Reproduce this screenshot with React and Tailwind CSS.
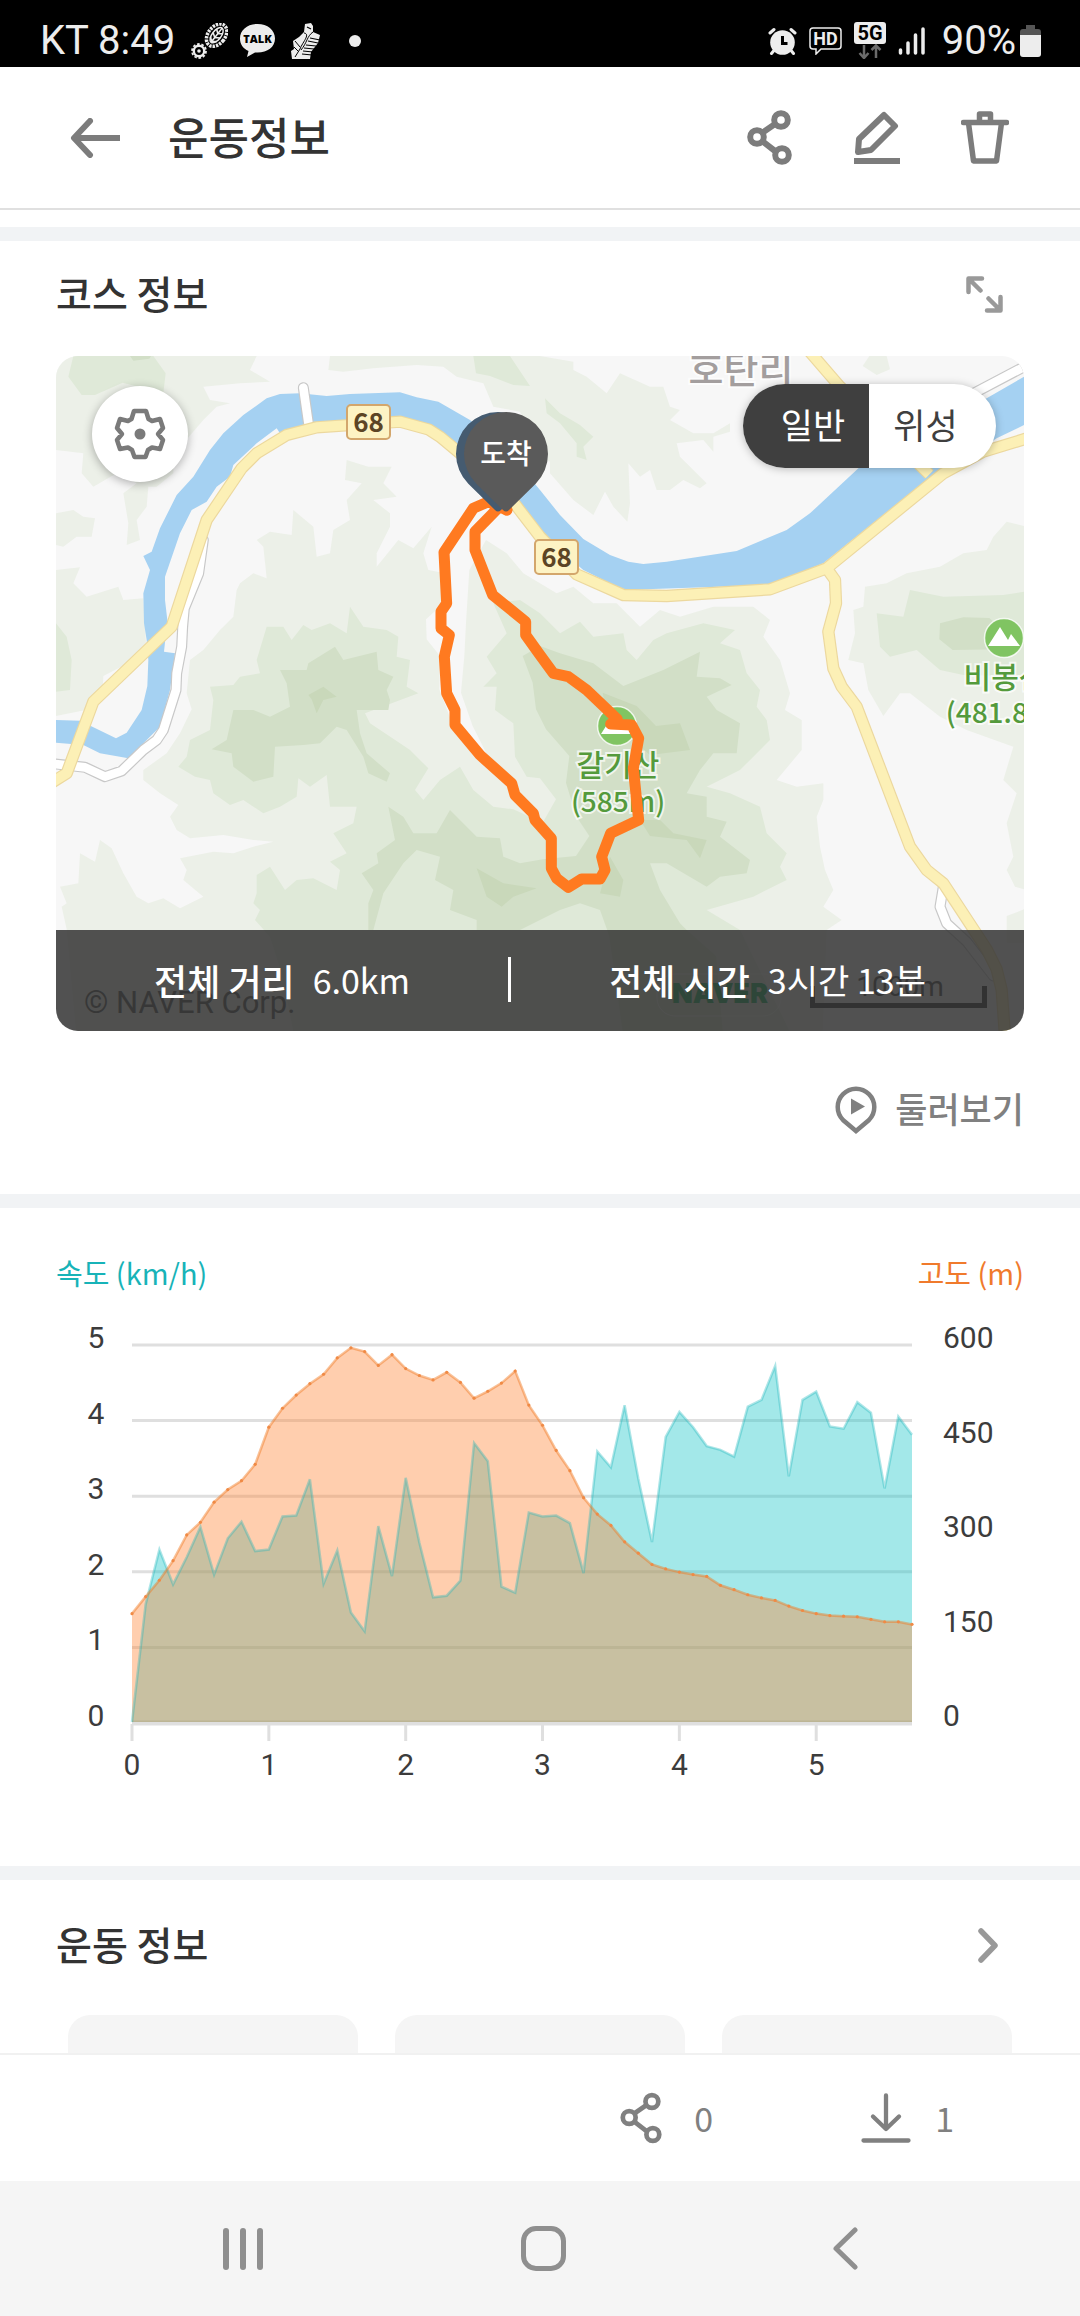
const KR = "font-['Noto_Sans_CJK_KR',sans-serif]"
const ROBOTO = "font-['Roboto',sans-serif]"

// one sample every 0.1 km
const SPEED = [
  0, 1.56, 2.28, 1.82, 2.18, 2.58, 1.95, 2.43, 2.65, 2.26, 2.28, 2.72, 2.73, 3.21, 1.83,
  2.27, 1.45, 1.2, 2.59, 1.93, 3.23, 2.37, 1.65, 1.67, 1.87, 3.69, 3.45, 1.79, 1.71, 2.77,
  2.72, 2.73, 2.63, 1.97, 3.58, 3.37, 4.19, 3.22, 2.38, 3.77, 4.1, 3.9, 3.65, 3.6, 3.51,
  4.17, 4.26, 4.71, 3.25, 4.26, 4.37, 3.91, 3.88, 4.23, 4.09, 3.09, 4.04, 3.8,
]
const ALTITUDE = [
  172, 199, 225, 256, 297, 317, 349, 369, 383, 409, 468, 498, 519, 537, 552, 578, 594, 588,
  566, 583, 561, 550, 543, 555, 539, 514, 525, 538, 557, 503, 471, 431, 399, 356, 330, 312,
  286, 268, 250, 243, 238, 234, 231, 217, 210, 202, 197, 193, 184, 177, 172, 169, 168, 167,
  163, 159, 159, 155,
]

const CHART = { left: 76, right: 856, top: 48, bottom: 426 }

const toPoints = (data, max) =>
  data.map((v, i) => [
    CHART.left + (i * (CHART.right - CHART.left)) / (data.length - 1),
    CHART.bottom - (v / max) * (CHART.bottom - CHART.top),
  ])

const toLine = (points) => points.map(([x, y]) => `${x.toFixed(1)} ${y.toFixed(1)}`).join(' L')

/* ---------- icons ---------- */

function ShareIcon({ className, stroke = 6 }) {
  return (
    <svg className={className} viewBox="0 0 46 55" fill="none" stroke="currentColor" strokeWidth={stroke}>
      <path d="M15 23 L28 14 M15 31 L28 41" />
      <circle cx="34" cy="10" r="6.8" />
      <circle cx="10" cy="27" r="6.8" />
      <circle cx="35" cy="45" r="6.8" />
    </svg>
  )
}

function EditIcon() {
  return (
    <svg className="w-[46px] h-[54px]" viewBox="0 0 46 54" fill="none" stroke="currentColor" strokeWidth="6">
      <path d="M30 4 L41 15 L17 39 L4 41 L5 28 Z" strokeLinejoin="round" />
      <path d="M0 50 H46" />
    </svg>
  )
}

function TrashIcon() {
  return (
    <svg className="w-12 h-[54px]" viewBox="0 0 48 54" fill="none" stroke="currentColor" strokeWidth="5.5">
      <path d="M2.5 11.5 H45.5" strokeLinecap="round" />
      <path d="M18.5 11 V3 H29.5 V11" strokeLinejoin="round" />
      <path d="M7.5 12 L12.5 50 H35.5 L40.5 12" strokeLinejoin="round" />
    </svg>
  )
}

function GearIcon() {
  return (
    <svg className="w-13 h-13" viewBox="0 0 52 52" fill="none" stroke="#7a7a7a" strokeWidth="4.500" strokeLinejoin="round">
      <path d="M20 3 H32 L34.500 11 L38 13 L46 11 L49 20 L44 26 L49 32 L46 41 L38 39.500 L34 42 L31.500 49 H20.500 L18 42 L14 39.500 L6 41 L3 32 L8 26 L3 20 L6 11 L14 13 L17.500 11 Z" />
      <circle cx="26" cy="26" r="5.500" fill="#7a7a7a" stroke="none" />
    </svg>
  )
}

function TrackerIcon() {
  return (
    <svg className="w-[37px] h-9" viewBox="0 0 37 36" fill="none" stroke="#ededed">
      <g transform="rotate(38 25 13)">
        <ellipse cx="25" cy="12" rx="8.500" ry="12.500" strokeWidth="3.500" strokeDasharray="2.400 1" />
        <ellipse cx="25" cy="12" rx="4.500" ry="9" strokeWidth="1.500" />
        <path d="M25 3 V21 M21 7 L25 10 L29 7 M20.500 12 L25 15 L29.500 12 M21 17 L25 20 L29 17" strokeWidth="1.600" />
      </g>
      <circle cx="8" cy="28" r="5.200" strokeWidth="2.400" />
      <circle cx="8" cy="28" r="7" strokeWidth="1.800" strokeDasharray="2.600 1.800" />
      <circle cx="8" cy="28" r="1.800" fill="#ededed" stroke="none" />
    </svg>
  )
}

function TalkIcon() {
  return (
    <svg className="w-[35px] h-[34px]" viewBox="0 0 35 34">
      <path d="M17.500 0 C27.500 0 35 6 35 14.500 C35 23 27.500 28.500 17.500 28.500 L15 28.400 L7 33 L8.500 27 C3 24.500 0 20 0 14.500 C0 6 7.500 0 17.500 0 Z" fill="#ededed" />
      <text x="17.500" y="19" fontSize="11" textAnchor="middle" fill="#000" className="font-['Open_Sans',sans-serif] font-extrabold">
        TALK
      </text>
    </svg>
  )
}

function ShoeIcon() {
  return (
    <svg className="w-[30px] h-9" viewBox="0 0 30 36">
      <path d="M14 1 L20 0 L22 3 L22 9 L29 12 L27 20 L20 29 L19 36 H1 L0 28 L3 26 L2 18 L8 14 L13 9 Z" fill="#ededed" />
      <path d="M13 10 C20 11 11 20 9 26 L4 34 M22 9 C16 13 16 20 10 27 M4 18 L9 24 M3 24 L7 28" fill="none" stroke="#000" strokeWidth="1" />
      <path d="M19 15 L29 17 M17 18 L27 20 M15 22 L25 23 M13 25 L23 26 M12 28 L22 29 M11 31 L21 32 M16 4 L20 6" fill="none" stroke="#000" strokeWidth="1.200" />
    </svg>
  )
}

function AlarmIcon() {
  return (
    <svg className="w-[29px] h-7" viewBox="0 0 29 28" strokeLinecap="round">
      <circle cx="14.500" cy="15.500" r="12.300" fill="#ededed" />
      <path d="M2 6 L6 2.500 M27 6 L23 2.500 M5.500 24 L3.500 26.500 M23.500 24 L25.500 26.500" stroke="#ededed" strokeWidth="3" fill="none" />
      <path d="M14.500 9 V16.500 H19.500" stroke="#000" strokeWidth="3" fill="none" strokeLinecap="butt" />
    </svg>
  )
}

function HdIcon() {
  return (
    <svg className="w-[33px] h-7" viewBox="0 0 33 28">
      <path d="M4 1 H29 Q32 1 32 4 V19 Q32 22 29 22 H12 L7 27 V22 H4 Q1 22 1 19 V4 Q1 1 4 1 Z" fill="none" stroke="#ededed" strokeWidth="1.500" />
      <text x="16.500" y="18" fontSize="18" textAnchor="middle" fill="#ededed" className="font-['Roboto',sans-serif] font-bold">
        HD
      </text>
    </svg>
  )
}

function FiveGIcon() {
  return (
    <svg className="w-8 h-[37px]" viewBox="0 0 32 37">
      <rect width="32" height="22" rx="3" fill="#ededed" />
      <text x="16" y="18" fontSize="20" textAnchor="middle" fill="#000" className="font-['Roboto',sans-serif] font-bold">
        5G
      </text>
      <path d="M10 23 V35 M5.500 31 L10 36 L14.500 31 M22 36 V24 M17.500 28 L22 23.500 L26.500 28" stroke="#6b6b6b" strokeWidth="2.500" fill="none" />
    </svg>
  )
}

function MountainMark({ x, y }) {
  return (
    <g transform={`translate(${x} ${y})`}>
      <circle r="19.500" fill="#80c462" stroke="#fff" strokeOpacity="0.8" strokeWidth="1.500" />
      <path d="M-16 8 L-4 -11 L4 2 L7 -4 L16 8 Z" fill="#fff" />
    </g>
  )
}

function RoadBadge({ x, y }) {
  return (
    <g transform={`translate(${x} ${y})`}>
      <rect x="1" y="1" width="43" height="34" rx="4" fill="#fdf3c4" stroke="#d3a66c" strokeWidth="2" />
      <text x="22.500" y="28" fontSize="26" textAnchor="middle" fill="#5c4425" className="font-['Noto_Sans_CJK_KR',sans-serif] font-bold">
        68
      </text>
    </g>
  )
}

/* ---------- map ---------- */

const HILLS = [
  {
    fill: '#ecf0e8',
    d: [
      'M0 0 L602 0 L582 42 L642 77 L552 82 L442 92 L462 132 L522 142 L482 152 L442 192 L382 262 L352 277 L352 352 L302 392 L277 392 L272 452 L242 492 L252 552 L212 567 L217 502 L202 412 L242 382 L182 352 L112 392 L77 352 L82 292 L0 282 Z',
      'M822 0 L817 42 L862 47 L952 37 L1012 32 L1082 27 L1162 32 L1202 62 L1282 82 L1312 152 L1392 167 L1452 300 L1482 317 L1482 352 L1552 432 L1612 477 L1647 407 L1672 452 L1714 497 L1722 442 L1717 322 L1752 362 L1782 342 L1802 402 L1842 402 L1882 372 L1932 397 L1952 382 L1872 302 L1862 262 L1942 252 L1972 287 L1972 242 L2022 227 L2022 202 L1972 232 L1912 232 L1842 192 L1872 162 L1842 152 L1822 92 L1782 92 L1692 52 L1652 112 L1592 62 L1552 42 L1552 17 L1452 0 Z',
      'M0 472 L52 462 L82 482 L117 487 L107 542 L62 542 L22 572 L0 567 Z',
      'M0 642 L72 634 L52 682 L92 722 L187 692 L202 732 L262 727 L270 860 L200 930 L142 960 L140 1000 L100 1060 L0 1080 Z',
      'M542 702 L552 682 L592 652 L632 667 L622 572 L602 552 L642 527 L707 537 L712 462 L772 512 L782 602 L822 592 L832 522 L882 492 L872 432 L917 382 L867 372 L872 312 L937 332 L1007 332 L982 382 L1022 422 L952 432 L1002 472 L1002 512 L962 592 L962 632 L1027 552 L1072 577 L1127 512 L1102 592 L1117 642 L1160 650 L1165 740 L1110 790 L1112 850 L1152 900 L1150 1000 L1180 1080 L1250 1180 L1300 1210 L1250 1110 L1215 1010 L1225 900 L1230 800 L1240 642 L1290 552 L1352 592 L1402 652 L1502 712 L1552 692 L1612 742 L1682 742 L1752 812 L1812 762 L1872 782 L1972 752 L2092 752 L2142 792 L2122 842 L2172 912 L2202 1012 L2187 1062 L2237 1092 L2237 1182 L2162 1272 L2222 1292 L2302 1282 L2302 1332 L2282 1382 L2292 1472 L2307 1542 L2332 1602 L2302 1652 L2357 1692 L2312 1722 L2300 2025 L60 2025 L32 1720 L17 1652 L32 1642 L12 1592 L67 1582 L72 1492 L117 1517 L132 1452 L167 1477 L202 1552 L242 1622 L277 1642 L322 1627 L372 1657 L442 1622 L382 1572 L392 1542 L372 1507 L472 1487 L532 1492 L592 1472 L652 1457 L592 1452 L502 1437 L402 1447 L362 1422 L342 1382 L367 1347 L312 1312 L262 1272 L262 1242 L332 1192 L372 1132 L407 1060 L392 1012 L402 912 L442 882 L492 822 L532 782 Z',
      'M2904 510 L2852 497 L2812 542 L2792 582 L2722 592 L2652 632 L2552 652 L2492 682 L2427 692 L2422 752 L2392 762 L2397 832 L2377 912 L2422 922 L2437 1002 L2482 1080 L2532 1012 L2562 1012 L2652 1082 L2732 1122 L2872 1172 L2842 1272 L2882 1312 L2852 1402 L2872 1502 L2852 1542 L2877 1592 L2904 1600 Z',
      'M2420 30 L2440 0 L2492 0 L2502 40 L2462 57 Z',
      'M2852 1680 L2904 1660 V1760 L2852 1760 Z',
    ],
  },
  {
    fill: '#dfe9d8',
    d: [
      'M52 0 L37 62 L77 117 L117 117 L200 80 L322 112 L329 52 L292 0 Z',
      'M0 802 L32 842 L47 912 L42 1002 L0 1007 Z',
      'M1252 0 L1260 52 L1302 60 L1372 87 L1422 90 L1382 30 L1362 0 Z',
      'M1467 127 L1512 172 L1572 207 L1612 242 L1582 272 L1592 312 L1562 302 L1562 262 L1512 202 L1472 172 Z',
      'M632 812 L682 812 L707 852 L742 807 L767 822 L822 802 L872 832 L882 752 L922 812 L992 822 L1027 842 L1022 902 L1062 912 L1052 992 L1087 1012 L927 1072 L942 1102 L1032 1162 L1062 1182 L1117 1237 L1077 1302 L1102 1332 L1152 1272 L1212 1232 L1252 1302 L1312 1352 L1372 1360 L1460 1400 L1500 1330 L1452 1267 L1412 1262 L1377 1202 L1372 1102 L1317 1062 L1322 992 L1282 992 L1322 952 L1292 902 L1352 832 L1312 742 L1392 732 L1452 772 L1512 832 L1572 797 L1612 842 L1702 832 L1712 882 L1742 912 L1792 852 L1832 832 L1942 802 L2037 822 L1992 862 L2052 882 L2072 952 L2112 1002 L2102 1052 L2132 1092 L2142 1152 L2092 1202 L2052 1242 L1952 1292 L2022 1312 L2112 1352 L2132 1432 L2192 1492 L2172 1532 L2192 1572 L2092 1622 L1952 1662 L2002 1692 L2052 1722 L2200 2025 L712 2025 L680 1860 L642 1742 L597 1692 L612 1662 L592 1642 L602 1612 L602 1557 L642 1532 L687 1602 L722 1572 L772 1567 L842 1602 L852 1542 L822 1517 L872 1492 L832 1432 L892 1402 L902 1352 L822 1352 L812 1257 L762 1292 L727 1267 L722 1322 L672 1352 L622 1372 L562 1332 L522 1347 L472 1312 L462 1272 L417 1262 L367 1232 L392 1202 L402 1152 L462 1122 L472 1032 L462 992 L532 987 L552 962 L612 952 L602 912 Z',
      'M2904 707 L2842 717 L2662 722 L2562 702 L2542 782 L2462 772 L2472 872 L2502 902 L2582 882 L2652 942 L2722 957 L2904 960 Z',
    ],
  },
  {
    fill: '#d2dfc7',
    d: [
      'M222 0 L232 14 L280 8 L285 0 Z',
      'M672 942 L752 942 L757 922 L837 872 L862 912 L962 887 L967 942 L1012 962 L992 1002 L1002 1032 L997 1062 L902 1062 L912 1132 L932 1192 L1002 1252 L992 1277 L937 1252 L922 1202 L872 1122 L842 1112 L792 1162 L742 1167 L657 1172 L652 1262 L592 1277 L532 1232 L527 1192 L467 1180 L512 1152 L532 1062 L592 1062 L642 1082 L702 1052 L692 982 Z',
      'M997 1352 L1042 1382 L1072 1432 L1142 1432 L1182 1362 L1262 1442 L1332 1447 L1342 1502 L1392 1522 L1460 1510 L1560 1500 L1600 1440 L1560 1380 L1530 1280 L1540 1200 L1470 1120 L1440 1060 L1430 980 L1400 900 L1452 870 L1512 892 L1612 922 L1702 990 L1822 942 L1932 887 L1922 962 L1992 967 L2027 987 L1952 1022 L1982 1062 L2052 1102 L2042 1192 L1972 1192 L1932 1242 L1892 1312 L1952 1322 L1952 1382 L2012 1397 L1992 1442 L2082 1512 L2072 1552 L1992 1562 L1952 1592 L1832 1522 L1782 1522 L1812 1602 L1872 1702 L1892 1722 L1980 1800 L2000 2025 L1700 2025 L1660 1740 L1632 1662 L1572 1642 L1512 1662 L1392 1722 L1262 1722 L1262 1692 L1182 1662 L1192 1602 L1137 1572 L1152 1502 L1082 1482 L1042 1522 L982 1612 L952 1722 L937 1722 L937 1642 L952 1602 L917 1552 L967 1522 L962 1492 L1017 1452 Z',
      'M2652 802 L2722 784 L2800 786 L2850 830 L2840 880 L2690 882 L2650 850 Z',
    ],
  },
  {
    fill: '#c9d8ba',
    d: [
      'M757 1017 L802 992 L842 1022 L802 1032 L782 1072 L767 1030 Z',
      'M1262 1537 L1342 1582 L1442 1597 L1372 1622 L1337 1652 L1292 1622 Z',
      'M1640 1010 L1690 1030 L1742 1050 L1800 1110 L1872 1102 L1902 1182 L1782 1197 L1740 1160 L1660 1120 Z',
      'M1752 1392 L1812 1392 L1852 1432 L1952 1452 L1932 1507 L1892 1452 L1782 1440 Z',
      'M1662 1502 L1702 1572 L1692 1622 L1632 1612 Z',
    ],
  },
]

const RIVER =
  'M0 1092 L72 1094 L180 1147 L212 1130 L257 1062 L274 990 L277 912 L272 852 L264 802 L262 712 L282 642 L262 600 L287 587 L312 517 L362 417 L412 362 L462 282 L502 232 L562 177 L632 127 L672 114 L732 112 L812 120 L882 114 L1032 109 L1082 124 L1147 137 L1242 192 L1360 290 L1452 402 L1512 477 L1582 549 L1662 597 L1717 617 L1762 624 L1832 617 L2042 585 L2192 522 L2262 472 L2412 332 L2560 220 L2792 127 L2904 62 L2904 207 L2822 247 L2692 337 L2612 372 L2302 622 L2142 687 L1702 702 L1582 642 L1452 532 L1372 432 L1202 302 L1122 212 L1032 182 L782 202 L672 232 L662 217 L602 262 L532 327 L522 362 L482 392 L452 437 L407 462 L372 532 L327 662 L327 732 L334 792 L324 887 L357 892 L342 1002 L312 1112 L217 1207 L132 1192 L82 1167 L0 1160 Z'

const WHITE_ROADS = [
  'M742 95 L757 200',
  'M442 552 L428 652 L385 757 L380 812 L377 872 L362 952 L360 1002 L322 1122 L302 1152 L262 1182 L197 1245 L147 1262 L87 1234 L-20 1222',
  'M2700 140 L2920 24',
  'M2662 1592 L2652 1652 L2672 1702 L2732 1757 L2812 1860',
]

const YELLOW_ROADS = [
  'M2312 637 L2337 672 L2340 742 L2317 827 L2332 937 L2357 992 L2402 1052 L2562 1472 L2612 1542 L2662 1582 L2792 1780 L2822 1840 L2837 1902 L2847 2040',
  'M2255 -20 L2352 92 L2620 355',
  'M-10 1278 L32 1252 L112 1037 L347 812 L452 492 L557 337 L602 292 L692 237 L782 214 L1032 197 L1117 220 L1152 242 L1242 317 L1352 412 L1452 542 L1562 655 L1702 717 L1832 720 L2142 700 L2312 637 L2662 352 L2782 287 L2920 245',
]

const TRAIL =
  'M1352 462 L1297 437 L1252 457 L1164 589 L1172 742 L1155 767 L1155 817 L1180 837 L1165 902 L1172 1012 L1197 1062 L1197 1107 L1272 1197 L1367 1282 L1377 1317 L1432 1372 L1437 1392 L1486 1447 L1486 1537 L1502 1567 L1537 1594 L1577 1569 L1632 1569 L1647 1542 L1637 1502 L1664 1432 L1748 1392 L1732 1237 L1748 1147 L1727 1107 L1664 1104 L1684 1090 L1592 1002 L1537 962 L1492 952 L1452 897 L1409 837 L1409 797 L1310 717 L1257 582 L1257 527 L1345 437'

// teardrop marker, origin at the centre of its round head
const PIN = 'M-29.700 29.700 A42 42 0 1 1 29.700 29.700 L3 56 Q0 59 -3 56 Z'

function RouteMap() {
  const label = "font-['Noto_Sans_CJK_KR',sans-serif] font-medium"
  return (
    <svg className="block w-full h-auto" viewBox="0 0 968 675" role="img" aria-label="코스 지도">
      <svg width="968" height="675" viewBox="0 0 2904 2025" fill="none" strokeLinejoin="round">
        <rect width="2904" height="2025" fill="#f7f7f7" />
        {HILLS.map(({ fill, d }) => (
          <path key={fill} d={d.join(' ')} fill={fill} />
        ))}
        <path d={RIVER} fill="#a5d1f2" />
        {WHITE_ROADS.map((d) => (
          <g key={d} strokeLinecap="round">
            <path d={d} stroke="#c8c8c8" strokeWidth="33" />
            <path d={d} stroke="#fff" strokeWidth="26" />
          </g>
        ))}
        {YELLOW_ROADS.map((d) => (
          <path key={d} d={d} stroke="#ecd89e" strokeWidth="37" />
        ))}
        {YELLOW_ROADS.map((d) => (
          <path key={d} d={d} stroke="#fcf0b6" strokeWidth="30" />
        ))}
      </svg>

      <RoadBadge x={290} y={48} />
      <RoadBadge x={478} y={183} />
      <MountainMark x={561} y={370} />
      <MountainMark x={948} y={282} />

      <g textAnchor="middle" stroke="#fff" strokeOpacity="0.7" strokeWidth="4" paintOrder="stroke" className={label}>
        <text x="685" y="27" fontSize="38" fill="#a39e9e">호탄리</text>
        <g fill="#549a3c">
          <text x="562" y="420" fontSize="30">갈기산</text>
          <text x="562" y="456" fontSize="28">(585m)</text>
          <text x="949" y="332" fontSize="30">비봉산</text>
          <text x="949" y="367" fontSize="28">(481.8m)</text>
        </g>
      </g>

      <svg width="968" height="675" viewBox="0 0 2904 2025" fill="none">
        <path d={TRAIL} stroke="#ff7a20" strokeWidth="33" strokeLinejoin="round" strokeLinecap="round" />
      </svg>
      <circle cx="451" cy="154" r="5.500" fill="#ff7a20" />
      <path d={PIN} transform="translate(442 98)" fill="#455b70" />
      <path d={PIN} transform="translate(450 98)" fill="#5a5a5a" />
      <text x="450" y="108" fontSize="28" textAnchor="middle" fill="#fff" className={label}>도착</text>

      {/* attribution and scale, under the summary bar */}
      <text x="28" y="657" fontSize="31" fill="#444" className="font-['Roboto',sans-serif]">© NAVER Corp.</text>
      <rect x="601" y="618" width="124" height="42" rx="18" fill="none" stroke="#fff" strokeOpacity="0.6" />
      <text x="664" y="647" fontSize="27" textAnchor="middle" fill="#03a94d" className="font-['Inter',sans-serif] font-black">NAVER</text>
      <text x="844" y="640" fontSize="28" textAnchor="middle" fill="#333" className="font-['Roboto',sans-serif]">1000m</text>
      <path d="M756.500 630 V649.500 H928.500 V630" fill="none" stroke="#222" strokeWidth="5" />
    </svg>
  )
}

/* ---------- chart ---------- */

function PaceChart() {
  const speed = toPoints(SPEED, 5)
  const altitude = toPoints(ALTITUDE, 600)
  const close = `L${CHART.right} ${CHART.bottom} L${CHART.left} ${CHART.bottom} Z`
  const rows = [0, 1, 2, 3, 4, 5]
  const yOf = (n, count) => CHART.bottom - (n * (CHART.bottom - CHART.top)) / count
  const xOf = (km) => CHART.left + (km * (CHART.right - CHART.left)) / 5.7

  return (
    <svg className="block w-full h-auto" viewBox="0 0 968 494" fill="none" role="img" aria-label="속도와 고도">
      {rows.map((n) => (
        <path key={n} d={`M${CHART.left} ${yOf(n, 5) + 1} H${CHART.right}`} stroke="#dfdfdf" strokeWidth={n ? 3 : 5} />
      ))}
      {rows.map((km) => (
        <path key={km} d={`M${xOf(km)} 428 V445`} stroke="#dfdfdf" strokeWidth="3" />
      ))}

      <g stroke="none" fillOpacity="0.4">
        <path d={`M${toLine(speed)} ${close}`} fill="#19c5c9" />
        <path d={`M${toLine(altitude)} ${close}`} fill="#ff8434" />
      </g>
      <path d={`M${toLine(speed)}`} stroke="#19b5b9" strokeOpacity="0.35" strokeWidth="2.500" />
      <path d={`M${toLine(altitude)}`} stroke="#f07820" strokeOpacity="0.45" strokeWidth="2.500" />
      {altitude.map(([x, y]) => (
        <circle key={x} cx={x} cy={y} r="1.600" fill="#f08a45" />
      ))}

      <g fontSize="30" fill="#3c3c3c" className="font-['Roboto',sans-serif]">
        {rows.map((n) => (
          <text key={n} x="40" y={yOf(n, 5) + 4} textAnchor="middle">{n}</text>
        ))}
        {rows.slice(0, 5).map((n) => (
          <text key={n} x="887" y={yOf(n, 4) + 4}>{n * 150}</text>
        ))}
        {rows.map((km) => (
          <text key={km} x={xOf(km)} y="479" textAnchor="middle">{km}</text>
        ))}
      </g>
    </svg>
  )
}

/* ---------- page ---------- */

function StatusBar() {
  return (
    <div className={`${ROBOTO} flex h-[67px] shrink-0 items-center justify-between bg-black pt-3.5 pr-[39px] pl-10 text-[40px] text-[#ededed]`}>
      <div className="flex items-center">
        <span>KT 8:49</span>
        <div className="ml-4 flex items-center gap-3">
          <TrackerIcon />
          <TalkIcon />
          <span className="ml-1 flex"><ShoeIcon /></span>
        </div>
        <span className="ml-7 h-3 w-3 rounded-full bg-[#ededed]" />
      </div>
      <div className="flex items-center">
        <div className="mr-4 flex items-center gap-3">
          <AlarmIcon />
          <HdIcon />
          <FiveGIcon />
          <svg className="h-[30px] w-7" viewBox="0 0 28 30" stroke="#ededed" strokeWidth="3.500" strokeLinecap="round">
            <path d="M2.500 24 V27 M10 17 V27 M17.500 9 V27 M25 3 V27" />
          </svg>
        </div>
        <span>90%</span>
        <svg className="ml-1 h-8 w-[21px]" viewBox="0 0 21 32">
          <path d="M6 0 H15 V4 H18 Q21 4 21 7 V12 H0 V7 Q0 4 3 4 H6 Z" fill="#555" />
          <path d="M0 10 H21 V29 Q21 32 18 32 H3 Q0 32 0 29 Z" fill="#ededed" />
        </svg>
      </div>
    </div>
  )
}

function Header() {
  return (
    <header className="flex h-[143px] shrink-0 items-center border-b-2 border-[#e0e0e0] pr-[71px] pl-[70px] text-[#7c7c7c]">
      <button type="button" aria-label="뒤로">
        <svg className="h-10 w-[50px]" viewBox="0 0 50 40" fill="none" stroke="currentColor" strokeWidth="6">
          <path d="M20 3 L4 20 L20 37" strokeLinecap="round" strokeLinejoin="round" />
          <path d="M5 20 H50" />
        </svg>
      </button>
      <h1 className="ml-12 flex-1 pb-1 text-[44px] font-medium text-[#333]">운동정보</h1>
      <div className="flex items-center gap-[61px]">
        <button type="button" aria-label="공유"><ShareIcon className="h-[55px] w-[46px]" /></button>
        <button type="button" aria-label="수정"><EditIcon /></button>
        <button type="button" aria-label="삭제"><TrashIcon /></button>
      </div>
    </header>
  )
}

function CourseSection() {
  return (
    <section className="border-t-14 border-[#f1f3f5] px-14 pt-[23px] pb-14">
      <div className="flex h-15 items-center justify-between pr-[21px]">
        <h2 className="pb-1 text-[39px] font-medium text-[#333]">코스 정보</h2>
        <button type="button" aria-label="지도 확대" className="text-[#999]">
          <svg className="h-[37px] w-[37px]" viewBox="0 0 37 37" fill="none" stroke="currentColor" strokeWidth="4.500" strokeLinecap="round" strokeLinejoin="round">
            <path d="M2.500 16 V2.500 H16 M3 3 L14.500 14.500 M34.500 21 V34.500 H21 M34 34 L22.500 22.500" />
          </svg>
        </button>
      </div>

      <div className="relative mt-8 overflow-hidden rounded-[22px]">
        <RouteMap />
        <button
          type="button"
          aria-label="지도 설정"
          className="absolute top-[30px] left-9 flex h-24 w-24 items-center justify-center rounded-full bg-white shadow-[0_2px_10px_rgba(0,0,0,0.3)]"
        >
          <GearIcon />
        </button>
        <div className="absolute top-7 right-7 flex h-21 overflow-hidden rounded-full bg-white text-[35px] shadow-[0_1px_8px_rgba(0,0,0,0.25)]">
          <button type="button" className="w-[126px] bg-[#3f3f3f] pb-1 pl-3.5 text-white">일반</button>
          <button type="button" className="w-[127px] pr-3.5 pb-1 text-[#3f3f3f]">위성</button>
        </div>
        <dl className="absolute inset-x-0 bottom-0 flex h-[101px] items-center bg-[#353535]/86 pb-0.5 text-[34px] text-white">
          <div className="flex flex-auto items-center justify-center gap-4.5">
            <dt className="text-[36px] font-medium">전체 거리</dt>
            <dd>6.0km</dd>
          </div>
          <div className="h-[45px] w-[3px] bg-white" />
          <div className="flex flex-auto items-center justify-center gap-4.5">
            <dt className="text-[36px] font-medium">전체 시간</dt>
            <dd>3시간 13분</dd>
          </div>
        </dl>
      </div>

      <div className="mt-[51px] flex justify-end">
        <button type="button" className="flex h-14 items-center gap-4.5 text-[35px] font-medium text-[#808080]">
          <svg className="h-12 w-[42px]" viewBox="0 0 42 48" fill="none" stroke="currentColor" strokeWidth="4.500">
            <path d="M8 34 A18.300 18.300 0 1 1 34 34 L21 45 Z" />
            <path d="M16 12.500 L30 20.500 L16 28.500 Z" fill="currentColor" stroke="none" />
          </svg>
          <span className="pb-1">둘러보기</span>
        </button>
      </div>
    </section>
  )
}

function ChartSection() {
  return (
    <section className="border-t-14 border-[#f1f3f5] px-14 pt-10 pb-19">
      <div className="flex justify-between text-[29px] leading-[48px]">
        <span className="text-[#17b3b8]">속도 (km/h)</span>
        <span className="text-[#f07a2c]">고도 (m)</span>
      </div>
      <PaceChart />
    </section>
  )
}

function WorkoutSection() {
  return (
    <section className="border-t-14 border-[#f1f3f5] px-14 pt-[35px] pb-14">
      <a href="#workout" className="flex h-15 items-center justify-between pr-[26px]">
        <h2 className="pb-1 text-[39px] font-medium text-[#333]">운동 정보</h2>
        <svg className="h-[35px] w-5" viewBox="0 0 20 35" fill="none" stroke="#999" strokeWidth="5.500" strokeLinecap="round" strokeLinejoin="round">
          <path d="M3 3 L17 17.500 L3 32" />
        </svg>
      </a>
      <div className="mt-10 grid grid-cols-3 gap-[37px] px-3">
        <div className="h-48 rounded-[22px] bg-[#f5f5f5]" />
        <div className="h-48 rounded-[22px] bg-[#f5f5f5]" />
        <div className="h-48 rounded-[22px] bg-[#f5f5f5]" />
      </div>
    </section>
  )
}

function ActionBar() {
  return (
    <div className="flex h-32 shrink-0 items-center justify-end gap-[148px] border-t-2 border-[#f1f1f1] bg-white pr-[126px] text-[34px] text-[#808080]">
      <button type="button" aria-label="공유 0" className="flex items-center gap-[30px]">
        <ShareIcon className="h-[52px] w-[45px]" stroke={5} />
        <span className="pb-0.5">0</span>
      </button>
      <button type="button" aria-label="저장 1" className="flex items-center gap-6">
        <svg className="h-[50px] w-[50px]" viewBox="0 0 50 50" fill="none" stroke="currentColor" strokeWidth="4.300" strokeLinecap="round" strokeLinejoin="round">
          <path d="M25 2.500 V36 M12 23.500 L25 36 L38 23.500 M2.500 47.500 H47.500" />
        </svg>
        <span className="pb-0.5">1</span>
      </button>
    </div>
  )
}

function NavBar() {
  return (
    <nav className="flex h-[135px] shrink-0 items-center bg-[#f5f5f5] pr-21 pl-23 text-[#8f8f8f]">
      <button type="button" aria-label="최근 앱" className="flex flex-1 justify-center gap-[11px]">
        <span className="h-[42px] w-[6px] rounded-full bg-current" />
        <span className="h-[42px] w-[6px] rounded-full bg-current" />
        <span className="h-[42px] w-[6px] rounded-full bg-current" />
      </button>
      <button type="button" aria-label="홈" className="flex flex-1 justify-center">
        <span className="h-[45px] w-[45px] rounded-[15px] border-[5px] border-current" />
      </button>
      <button type="button" aria-label="뒤로 가기" className="flex flex-1 justify-center">
        <svg className="h-[43px] w-[25px]" viewBox="0 0 25 43" fill="none" stroke="currentColor" strokeWidth="5" strokeLinecap="round" strokeLinejoin="round">
          <path d="M22 3 L3 21.500 L22 40" />
        </svg>
      </button>
    </nav>
  )
}

export default function App() {
  return (
    <div className={`${KR} flex h-screen flex-col bg-white`}>
      <StatusBar />
      <Header />
      <main className="min-h-0 flex-1 overflow-y-auto pt-[17px] [scrollbar-width:none]">
        <CourseSection />
        <ChartSection />
        <WorkoutSection />
      </main>
      <ActionBar />
      <NavBar />
    </div>
  )
}
